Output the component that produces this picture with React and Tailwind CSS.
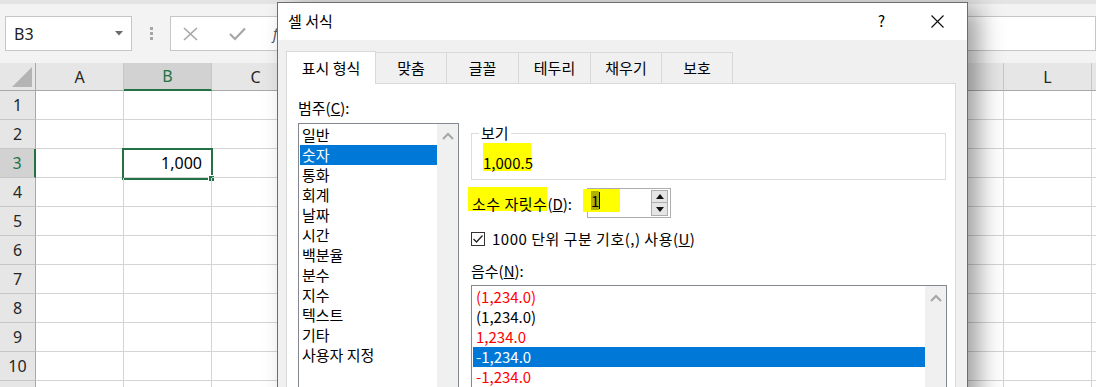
export default function App() {
  const cols = ['A', 'B', 'C', '', '', '', '', '', '', '', '', 'L', ''];
  const rows = [1, 2, 3, 4, 5, 6, 7, 8, 9, 10, ''];
  const cats = ['일반', '숫자', '통화', '회계', '날짜', '시간', '백분율', '분수', '지수', '텍스트', '기타', '사용자 지정'];
  const negs = [
    { t: '(1,234.0)', c: 'text-[#ff0000]' },
    { t: '(1,234.0)', c: 'text-black' },
    { t: '1,234.0', c: 'text-[#ff0000]' },
    { t: '-1,234.0', c: 'text-white bg-[#0078d7]' },
    { t: '-1,234.0', c: 'text-[#ff0000]' },
  ];
  const Chevron = () => (
    <svg width="12" height="8" viewBox="0 0 12 8" className="mx-auto mt-[8px]">
      <polyline points="1,7 6,2 11,7" fill="none" stroke="#a6a6a6" strokeWidth="2" />
    </svg>
  );
  return (
    <div className="relative w-[1096px] h-[387px] overflow-hidden bg-white font-['Noto_Sans','Noto_Sans_CJK_KR',sans-serif] text-black">
      {/* formula area */}
      <div className="h-[63px] bg-[#f3f3f3] border-t-[4px] border-[#e4e4e4] pt-[12px] pl-[5px] flex items-start">
        <div className="w-[127px] h-[35px] bg-white border border-[#c6c6c6] flex items-center justify-between pl-[8px] pr-[8px]">
          <span className="text-[16px] text-[#222]">B3</span>
          <svg width="8" height="5" viewBox="0 0 8 5"><path d="M0 0 L8 0 L4 4.5 Z" fill="#6a6a6a" /></svg>
        </div>
        <div className="w-[38px] h-[35px] flex flex-col items-center justify-center gap-[2px]">
          <div className="w-[3px] h-[3px] bg-[#a6a6a6]" />
          <div className="w-[3px] h-[3px] bg-[#a6a6a6]" />
          <div className="w-[3px] h-[3px] bg-[#a6a6a6]" />
        </div>
        <div className="flex-1 h-[35px] bg-white border border-[#c6c6c6] flex items-center">
          <svg width="15" height="14" viewBox="0 0 15 14" className="ml-[12px]">
            <path d="M1 1 L14 13 M14 1 L1 13" stroke="#a6a6a6" strokeWidth="1.6" />
          </svg>
          <svg width="17" height="14" viewBox="0 0 17 14" className="ml-[31px]">
            <path d="M1 7 L6 12 L16 1.5" fill="none" stroke="#a6a6a6" strokeWidth="2.2" />
          </svg>
          <span className="ml-[27px] text-[14px] italic text-[#555]">fx</span>
        </div>
      </div>

      {/* column headers */}
      <div className="flex h-[28px]">
        <div className="w-[36px] shrink-0 bg-[#e6e6e6] border-r border-b border-[#a8a8a8] flex items-end justify-end pr-[3px] pb-[3px]">
          <svg width="20" height="20" viewBox="0 0 20 20"><polygon points="20,0 20,20 0,20" fill="#b4b4b4" /></svg>
        </div>
        {cols.map((c, i) => (
          <div
            key={i}
            className={
              c === 'B'
                ? 'w-[88px] shrink-0 bg-[#d2d2d2] border-r border-[#c6c6c6] border-b-2 border-b-[#217346] flex items-center justify-center text-[16px] text-[#217346]'
                : 'w-[88px] shrink-0 bg-[#e6e6e6] border-r border-[#c6c6c6] border-b border-b-[#a8a8a8] flex items-center justify-center text-[16px] text-[#262626]'
            }
          >
            {c}
          </div>
        ))}
      </div>

      {/* rows */}
      {rows.map((r, ri) => (
        <div key={ri} className="flex h-[29px]">
          <div
            className={
              r === 3
                ? 'w-[36px] shrink-0 bg-[#d2d2d2] border-r-2 border-r-[#217346] border-b border-b-[#c6c6c6] flex items-center justify-center text-[16px] text-[#217346]'
                : 'w-[36px] shrink-0 bg-[#e6e6e6] border-r border-r-[#a8a8a8] border-b border-b-[#c6c6c6] flex items-center justify-center text-[16px] text-[#262626]'
            }
          >
            {r}
          </div>
          {cols.map((c, ci) => (
            <div key={ci} className="relative w-[88px] shrink-0 border-r border-b border-[#d4d4d4] flex items-center justify-end pr-[9px] text-[16px]">
              {r === 3 && ci === 1 && (
                <>
                  <span>1,000</span>
                  <div className="absolute -left-[2px] -top-[1px] w-[91px] h-[32px] border-2 border-[#217346]">
                    <div className="absolute -right-[4px] -bottom-[4px] w-[7px] h-[7px] bg-[#217346] border border-white" />
                  </div>
                </>
              )}
            </div>
          ))}
        </div>
      ))}

      {/* dialog */}
      <div className="absolute left-[277px] top-[2px] w-[691px] h-[420px] bg-[#f0f0f0] border border-[#6d6d6d] shadow-[12px_4px_24px_-2px_rgba(0,0,0,0.4)] font-['Noto_Sans_CJK_KR',sans-serif] text-[15px] text-black">
        <div className="h-[37px] bg-white flex items-center pl-[10px] pr-[23px]">
          <span>셀 서식</span>
          <span className="ml-auto">?</span>
          <svg width="13" height="13" viewBox="0 0 13 13" className="ml-[46px]">
            <path d="M0.5 0.5 L12.5 12.5 M12.5 0.5 L0.5 12.5" stroke="#111" strokeWidth="1.2" />
          </svg>
        </div>
        <div className="pt-[11px] pl-[8px]">
          <div className="flex items-end h-[32px]">
            <div className="relative z-10 w-[90px] h-[33px] -mb-px bg-white border-l border-t border-r border-[#d9d9d9] flex items-center justify-center">표시 형식</div>
            {[
              ['맞춤', 'w-[71px]'],
              ['글꼴', 'w-[72px]'],
              ['테두리', 'w-[72px]'],
              ['채우기', 'w-[71px]'],
              ['보호', 'w-[71px]'],
            ].map(([t, w]) => (
              <div key={t} className={`${w} h-[31px] bg-[#f0f0f0] border-t border-r border-[#d9d9d9] flex items-center justify-center`}>{t}</div>
            ))}
          </div>
          <div className="w-[670px] h-[340px] bg-white border border-[#d9d9d9] flex items-start">
            {/* left column */}
            <div className="pl-[11px] w-[172px] shrink-0">
              <div className="mt-[14px] h-[20px] leading-[20px]">
                범주(<span className="underline">C</span>):
              </div>
              <div className="mt-[5px] w-[161px] h-[300px] border border-[#828790] pl-[1px] pt-[1px] flex">
                <div className="w-[137px]">
                  {cats.map((c) => (
                    <div key={c} className={c === '숫자' ? 'h-[20px] leading-[20px] px-[2px] bg-[#0078d7] text-white' : 'h-[20px] leading-[20px] px-[2px]'}>
                      {c}
                    </div>
                  ))}
                </div>
                <div className="w-[21px] bg-[#f0f0f0] -mt-[1px]">
                  <Chevron />
                </div>
              </div>
            </div>

            {/* right column */}
            <div className="ml-[12px] w-[476px] shrink-0 flex flex-col">
              <div className="relative shrink-0 mt-[49px] h-[47px] w-[475px] border border-[#dcdcdc]">
                <div className="absolute -top-[11px] left-[7px] bg-white px-[2px] leading-[20px]">보기</div>
                <div className="mt-[9px] ml-[11px] w-[48px] h-[28px] bg-[#ffff00] pt-[11px] leading-[18px]">1,000.5</div>
              </div>

              <div className="shrink-0 mt-[7px] h-[30px] flex items-start">
                <div className="-ml-[3px] w-[119px] shrink-0 flex items-start">
                  <div className="h-[24px] bg-[#ffff00] pl-[4px] flex items-end leading-[14px] tracking-[0.5px]">소수 자릿수</div>
                  <div className="h-[24px] flex items-end leading-[14px]">
                    (<span className="underline">D</span>):
                  </div>
                </div>
                <div className="relative mt-[1px] w-[84px] h-[30px] border border-[#adadad] bg-white flex items-center justify-end pr-[2px]">
                  <div className="absolute -left-[5px] top-[0px] w-[37px] h-[23px] bg-[#ffff00]" />
                  <div className="absolute left-[3px] top-[2px] h-[19px] w-[8px] bg-[#b0b000] leading-[19px] text-center">1</div>
                  <div className="absolute left-[11px] top-[3px] h-[17px] w-[1px] bg-black" />
                  <div className="w-[17px] h-[26px] flex flex-col">
                    <div className="h-[13px] bg-[#e5e5e5] border border-[#adadad] flex items-center justify-center">
                      <svg width="8" height="5" viewBox="0 0 8 5"><path d="M0 5 L8 5 L4 0 Z" fill="#111" /></svg>
                    </div>
                    <div className="h-[13px] bg-[#e5e5e5] border border-t-0 border-[#adadad] flex items-center justify-center">
                      <svg width="8" height="5" viewBox="0 0 8 5"><path d="M0 0 L8 0 L4 5 Z" fill="#111" /></svg>
                    </div>
                  </div>
                </div>
              </div>

              <div className="shrink-0 mt-[12px] h-[20px] flex items-center">
                <div className="w-[14px] h-[14px] border border-[#333] bg-white flex items-center justify-center">
                  <svg width="12" height="12" viewBox="0 0 12 12"><path d="M1.5 6 L4.5 9 L10.5 2.5" fill="none" stroke="#222" strokeWidth="1.3" /></svg>
                </div>
                <span className="ml-[7px] leading-[20px] tracking-[0.5px]">
                  1000 단위 구분 기호(,) 사용(<span className="underline">U</span>)
                </span>
              </div>

              <div className="shrink-0 mt-[12px] h-[20px] leading-[20px]">
                음수(<span className="underline">N</span>):
              </div>

              <div className="shrink-0 mt-[4px] w-[476px] h-[150px] border border-[#828790] pl-[1px] pt-[1px] flex">
                <div className="w-[452px]">
                  {negs.map((n, i) => (
                    <div key={i} className={`h-[20px] leading-[20px] px-[3px] ${n.c}`}>{n.t}</div>
                  ))}
                </div>
                <div className="w-[21px] bg-[#f0f0f0] -mt-[1px]">
                  <Chevron />
                </div>
              </div>
            </div>
          </div>
        </div>
      </div>
    </div>
  );
}
